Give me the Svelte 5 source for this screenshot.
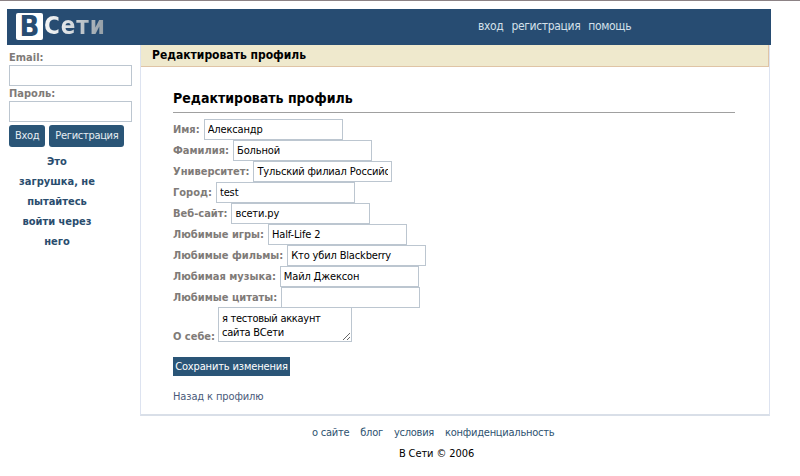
<script>
  const fields = [
    ['Имя:', 'Александр'],
    ['Фамилия:', 'Больной'],
    ['Университет:', 'Тульский филиал Российского'],
    ['Город:', 'test'],
    ['Веб-сайт:', 'всети.ру'],
    ['Любимые игры:', 'Half-Life 2'],
    ['Любимые фильмы:', 'Кто убил Blackberry'],
    ['Любимая музыка:', 'Майл Джексон'],
    ['Любимые цитаты:', '']
  ];
</script>

<div class="page">
  <div class="topline"></div>
  <header class="header">
    <div class="logo"><span class="logo-b">В</span><span class="logo-t">Сети</span></div>
    <nav class="nav"><span>вход</span><span>регистрация</span><span>помощь</span></nav>
  </header>
  <div class="columns">
    <aside class="side">
      <div class="slabel">Email:</div>
      <input class="sinput" />
      <div class="slabel second">Пароль:</div>
      <input class="sinput" type="password" />
      <div class="btns">
        <button class="btn">Вход</button>
        <button class="btn">Регистрация</button>
      </div>
      <p class="note">Это загрушка, не пытайтесь войти через него</p>
    </aside>
    <main class="main">
      <div class="bar">Редактировать профиль</div>
      <div class="content">
        <h2 class="title">Редактировать профиль</h2>
        <form class="form">
          {#each fields as [label, value]}
            <div class="row"><span class="lab">{label}</span><input class="field" {value} /></div>
          {/each}
          <div class="row about">
            <span class="lab">О себе:</span>
            <textarea class="area" value={'я тестовый аккаунт\nсайта ВСети'}></textarea>
          </div>
          <button type="button" class="save">Сохранить изменения</button>
        </form>
        <div class="back">Назад к профилю</div>
      </div>
    </main>
  </div>
  <footer class="footer">
    <div class="flinks"><span>о сайте</span><span>блог</span><span>условия</span><span>конфиденциальность</span></div>
    <div class="copy">В Сети © 2006</div>
  </footer>
</div>

<style>
  :global(body) { margin: 0; background: #fff; }
  .page {
    width: 800px; height: 476px; overflow: hidden; box-sizing: border-box;
    font-family: "DejaVu Sans Condensed", "DejaVu Sans", sans-serif; font-size: 11px; color: #000;
  }
  .topline { height: 1px; background: #8c8285; margin-bottom: 8px; }
  .header {
    margin-left: 7px; width: 764px; height: 36px; background: #274c72; display: flex; position: relative;
  }
  .logo { display: flex; align-items: center; padding: 4px 0 0 9px; height: 27px; }
  .logo-b {
    width: 27px; height: 27px; background: #fff; border-radius: 2px; color: #274c72;
    font: bold 29px/27px "DejaVu Sans Condensed", sans-serif; text-align: center;
  }
  .logo-t {
    margin-left: 1px; font: bold 24px/27px "DejaVu Sans Condensed", sans-serif; letter-spacing: 0.9px;
    background: linear-gradient(90deg, #f4f5f6 0%, #dfe3e6 35%, #8f9aa3 100%);
    -webkit-background-clip: text; background-clip: text; color: transparent;
  }
  .nav { position: absolute; left: 471px; top: 10px; display: flex; gap: 8px; color: #d4e0ea; font-size: 12px; line-height: 15px; letter-spacing: -0.35px; }
  .columns { display: flex; align-items: flex-start; }
  .side { width: 140px; padding-left: 9px; box-sizing: border-box; flex: none; }
  .slabel { color: #7f7b78; font-weight: bold; font-size: 11px; line-height: 14px; margin-top: 6px; height: 14px; }
  .slabel.second { margin-top: 1px; }
  .sinput {
    display: block; width: 123px; height: 21px; box-sizing: border-box; margin: 0;
    border: 1px solid #bcc6d0; background: #fff; padding: 1px 3px; outline: none;
  }
  .btns { display: flex; gap: 4px; margin-top: 3px; }
  .btn {
    height: 22px; padding: 0 6px; border: 0; border-radius: 3px; background: #2a5577; color: #e6edf3;
    font: inherit; line-height: 22px; letter-spacing: -0.3px;
  }
  .note {
    width: 80px; margin: 5px 0 0 8px; text-align: center; font-weight: bold; line-height: 20px; color: #2a4d6e;
  }
  .main {
    width: 628px; height: 369px; box-sizing: content-box; flex: none;
    border-left: 1px solid #dde3f0; border-right: 1px solid #dde3f0; border-bottom: 2px solid #d9dfe8;
  }
  .bar {
    height: 21px; background: #efe9cd; border-bottom: 1px solid #dfc4a5; border-right: 1px solid #dfc4a5;
    font-weight: bold; font-size: 12px; line-height: 20px; padding-left: 11px;
  }
  .content { padding: 21px 34px 0 32px; }
  .title {
    margin: 0; font-size: 14px; line-height: 20px; font-weight: bold; height: 24px;
    border-bottom: 1px solid #a0a0a0;
  }
  .form { margin-top: 6px; }
  .row { display: flex; align-items: center; gap: 4px; height: 21px; }
  .lab { font-weight: bold; color: #7f7b78; white-space: nowrap; }
  .field {
    width: 139px; height: 21px; box-sizing: border-box; margin: 0; border: 1px solid #bcc6d0;
    padding: 1px 3px; font: inherit; color: #000; outline: none; letter-spacing: -0.15px;
  }
  .about { height: 35px; align-items: flex-end; margin-top: -1px; gap: 3px; }
  .about .lab { line-height: 14px; margin-bottom: -2px; }
  .area {
    width: 134px; height: 35px; box-sizing: border-box; margin: 0; border: 1px solid #bcc6d0;
    padding: 4px 3px 0; font: inherit; line-height: 14px; color: #000; outline: none; overflow: hidden; letter-spacing: -0.28px;
  }
  .save {
    display: block; margin-top: 15px; height: 19px; width: 117px; padding: 0; border: 0; background: #2a5577; color: #fff;
    font: inherit; line-height: 19px; letter-spacing: -0.15px;
  }
  .back { margin-top: 14px; color: #4a5a7a; line-height: 14px; letter-spacing: -0.12px; }
  .footer { text-align: center; }
  .flinks { display: flex; padding-left: 312px; gap: 11px; margin-top: 10px; color: #2e5270; line-height: 14px; letter-spacing: -0.25px; }
  .copy { margin-top: 7px; line-height: 14px; text-align: center; width: 873px; letter-spacing: -0.1px; }
</style>
